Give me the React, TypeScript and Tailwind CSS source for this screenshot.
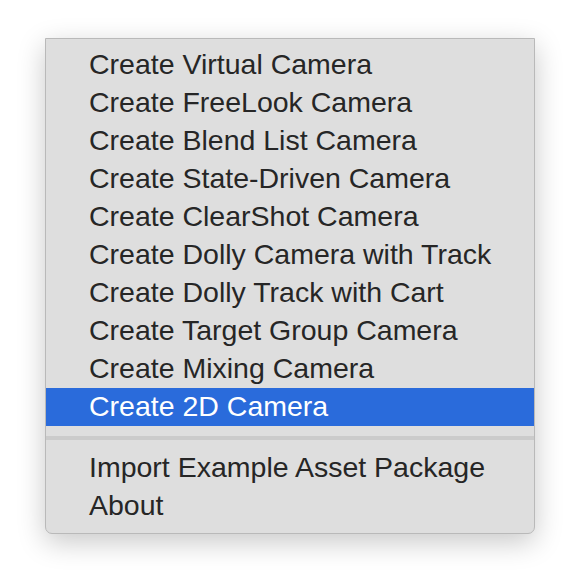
const items = [
  "Create Virtual Camera",
  "Create FreeLook Camera",
  "Create Blend List Camera",
  "Create State-Driven Camera",
  "Create ClearShot Camera",
  "Create Dolly Camera with Track",
  "Create Dolly Track with Cart",
  "Create Target Group Camera",
  "Create Mixing Camera",
  "Create 2D Camera",
];

const extras = ["Import Example Asset Package", "About"];

export default function App() {
  const active = "Create 2D Camera";

  return (
    <div className="w-[580px] h-[588px] bg-white pt-[38px] pl-[45px] font-['Liberation_Sans',Arial,sans-serif]">
      <div className="w-[490px] bg-[#dedede] border border-[#b9b9b9] rounded-b-[7px] shadow-[0_8px_28px_rgba(0,0,0,0.22)] pt-[7px] pb-[8px]">
        {items.map((label) => (
          <div
            key={label}
            className={
              label === active
                ? "h-[38px] leading-[36px] pl-[43px] text-[28.5px] text-white bg-[#2a6bdb]"
                : "h-[38px] leading-[36px] pl-[43px] text-[28.5px] text-[#262626]"
            }
          >
            {label}
          </div>
        ))}
        <div className="pt-[10px] pb-[9px]">
          <div className="h-[4px] bg-[#cbcbcb]" />
        </div>
        {extras.map((label) => (
          <div key={label} className="h-[38px] leading-[36px] pl-[43px] text-[28.5px] text-[#262626]">
            {label}
          </div>
        ))}
      </div>
    </div>
  );
}
